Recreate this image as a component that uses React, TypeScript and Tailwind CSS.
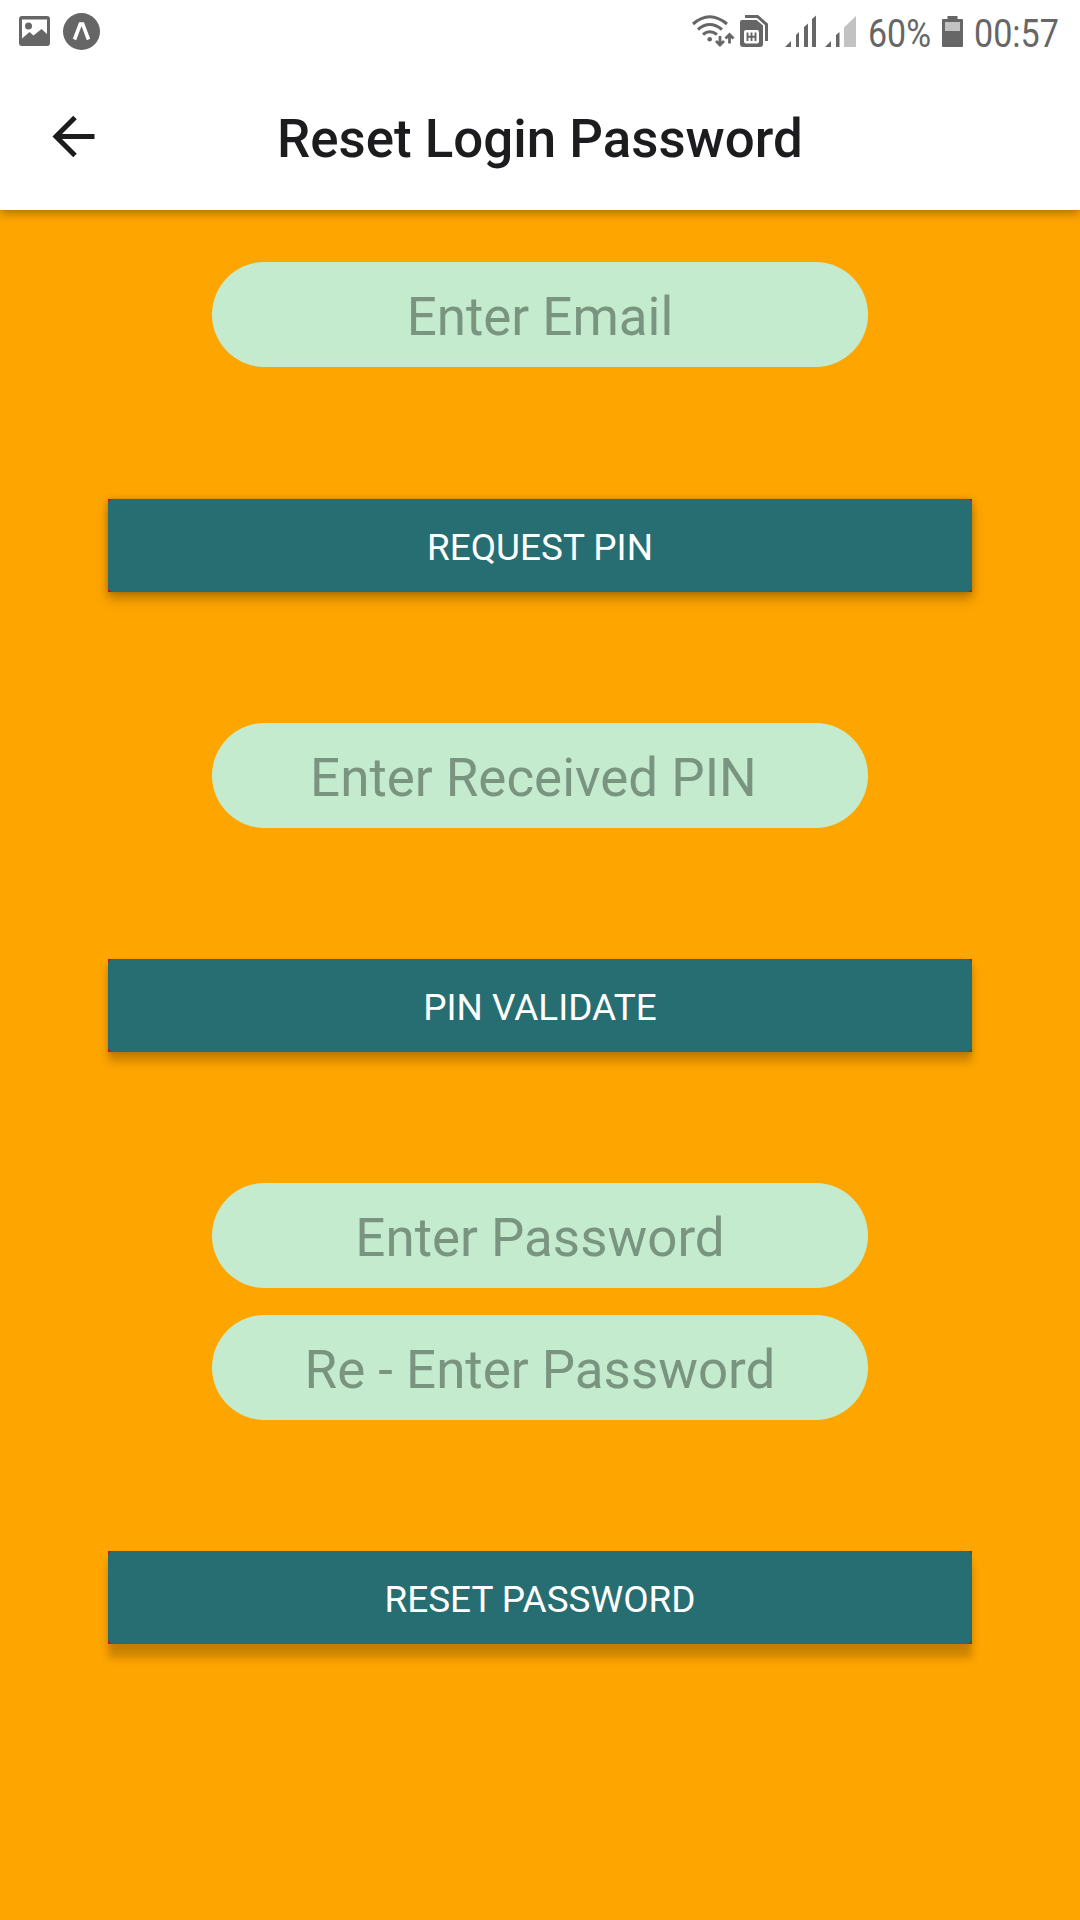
import React from "react";

function Field({ text, className = "" }: { text: string; className?: string }) {
  return (
    <div className={`flex h-[105px] w-[656px] shrink-0 items-center justify-center rounded-[52.5px] bg-[#c5ebcf] text-[52.9px] leading-[62px] text-[#79957f] ${className}`}>
      <span className="relative top-[2px] whitespace-pre">{text}</span>
    </div>
  );
}

function Button({ text, className = "" }: { text: string; className?: string }) {
  return (
    <div className={`h-[93px] w-[864px] shrink-0 bg-[#c01818] ${className}`}>
      <div className="flex h-full items-center justify-center rounded-[5px] bg-[#276e73] text-[36.9px] leading-[43px] text-white">
        <span className="relative top-[2px] whitespace-pre">{text}</span>
      </div>
    </div>
  );
}

function LeftIcons() {
  return (
    <svg width="120" height="64" viewBox="0 0 120 64" fill="#666">
      <path fillRule="evenodd" d="M22 16h25a3 3 0 0 1 3 3v24a3 3 0 0 1-3 3H22a3 3 0 0 1-3-3V19a3 3 0 0 1 3-3zM22 19.500V38.500l7.500-6.500 4 3.500L41.500 29l5.500 5V19.500z" />
      <circle cx="28.500" cy="26" r="3.500" />
      <circle cx="81.500" cy="31.500" r="18.500" />
      <path d="M74.500 39.500L80.300 24H82.700L88.500 39.500" fill="none" stroke="#fff" strokeWidth="3.600" />
    </svg>
  );
}

function RightIcons() {
  return (
    <svg width="180" height="64" viewBox="680 0 180 64" fill="none" stroke="#666">
      <path d="M693 24q16.500-14.500 34 0M698 29.500q11.500-10 24 0M703 34.500q6.500-5.500 14 0" strokeWidth="3" />
      <circle cx="709.700" cy="39.300" r="2.300" fill="#666" stroke="none" />
      <path d="M720 36v9M716 41l4 4 4-4M729.500 43.500v-9M725.500 38.500l4-4 4 4" strokeWidth="2.800" />
      <path d="M745 16.500h12.500l9 8V41" strokeWidth="3" />
      <path d="M742 20h14.500l6.500 5.500V44a3 3 0 0 1-3 3H743a3 3 0 0 1-3-3V22a2 2 0 0 1 2-2z" fill="#666" stroke="none" />
      <rect x="744" y="30" width="15" height="13.500" rx="2" fill="#fff" stroke="none" />
      <path d="M747.500 32.500v8.500M751.500 32.500v8.500M755.500 32.500v8.500M747.500 36.700h8" strokeWidth="1.900" />
      <g fill="#666" stroke="none">
        <path d="M785 47l6-6v6zM796 35l3-3v15h-3zM804 27l4-3.500V47h-4zM812 19l4-3.500V47h-4zM825 47l6-6v6zM836 35l3.500-3v15H836z" />
        <path d="M844 27.500L856 16v31h-12z" fill="#c2c2c2" />
      </g>
    </svg>
  );
}

export default function App() {
  return (
    <div className="flex h-[1920px] w-[1080px] flex-col overflow-hidden bg-[#ffa500] font-['Roboto',sans-serif]">
      <header className="relative h-[210px] shrink-0 bg-white shadow-[0_3px_10px_rgba(0,0,0,0.34)]">
        <div className="flex h-16 items-start text-[#666]">
          <LeftIcons />
          <div className="ml-[560px]">
            <RightIcons />
          </div>
          <div className="relative top-[10px] ml-[8px] flex h-[48px] w-[64px] items-center text-[39px]">
            <span className="origin-left scale-x-[0.870]">60%</span>
          </div>
          <svg className="ml-[9px]" width="24" height="64" viewBox="941 0 24 64">
            <path d="M942 20a1 1 0 0 1 1-1h4.500v-3h10v3h4.500a1 1 0 0 1 1 1v26a1 1 0 0 1-1 1h-19a1 1 0 0 1-1-1z" fill="#666" />
            <path d="M945 22h15v9h-15z" fill="#c2c2c2" />
          </svg>
          <div className="relative top-[10px] ml-[9px] flex h-[48px] items-center text-[39px]">
            <span className="origin-left scale-x-[0.875]">00:57</span>
          </div>
        </div>
        <div className="flex h-[146px] items-center">
          <svg className="ml-[52px]" width="44" height="44" viewBox="52 115 44 44">
            <path d="M94.500 136.500H57M75 117.500L56 136.500L75 155.500" fill="none" stroke="#1c1c1e" strokeWidth="5" />
          </svg>
          <h1 className="relative top-[2px] ml-[181px] whitespace-nowrap text-[52.85px] font-medium leading-[62px] text-[#1c1c1e]">Reset Login Password</h1>
        </div>
      </header>
      <main className="flex flex-col items-center">
        <Field text="Enter Email" className="mt-[52px]" />
        <Button text="REQUEST PIN" className="mt-[132px] shadow-[0_7px_11px_rgba(0,0,0,0.26),0_0_6px_rgba(0,0,0,0.18)]" />
        <Field text="Enter Received PIN " className="mt-[131px]" />
        <Button text="PIN VALIDATE" className="mt-[131px] shadow-[0_10px_9px_rgba(0,0,0,0.2),0_2px_5px_rgba(0,0,0,0.12)]" />
        <Field text="Enter Password" className="mt-[131px]" />
        <Field text="Re - Enter Password" className="mt-[27px]" />
        <Button text="RESET PASSWORD" className="mt-[131px] shadow-[0_14px_8px_rgba(0,0,0,0.2),0_3px_6px_rgba(0,0,0,0.06)]" />
      </main>
    </div>
  );
}
